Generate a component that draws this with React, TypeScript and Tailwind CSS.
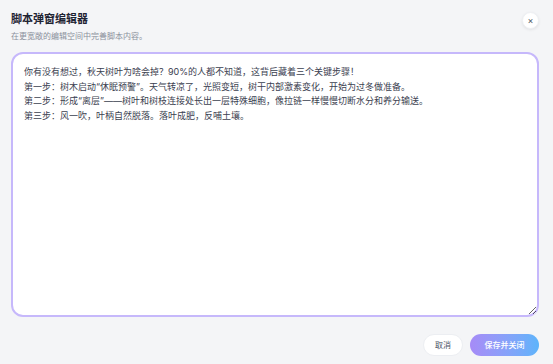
import { useEffect, useRef, useState } from 'react';

const initialScript = `你有没有想过，秋天树叶为啥会掉？90%的人都不知道，这背后藏着三个关键步骤！
第一步：树木启动“休眠预警”。天气转凉了，光照变短，树干内部激素变化，开始为过冬做准备。
第二步：形成“离层”——树叶和树枝连接处长出一层特殊细胞，像拉链一样慢慢切断水分和养分输送。
第三步：风一吹，叶柄自然脱落。落叶成肥，反哺土壤。 `;

export default function App() {
  const [script, setScript] = useState(initialScript);
  const ref = useRef<HTMLTextAreaElement>(null);

  useEffect(() => {
    // put the caret at the end, like the editor was just opened
    const el = ref.current;
    if (el) {
      el.focus();
      el.setSelectionRange(el.value.length, el.value.length);
    }
  }, []);

  return (
    <div
      className="w-full h-[364px] bg-[#f4f5f7] flex flex-col pl-[11px] pr-[14px] pt-[11px] pb-[8px]"
      style={{ fontFamily: 'Inter, "Noto Sans CJK SC", sans-serif' }}
    >
      <div className="flex items-start justify-between">
        <div>
          <h1 className="text-[11px] leading-[16px] font-bold text-[#1f2433]">脚本弹窗编辑器</h1>
          <p className="text-[8px] leading-[12px] mt-[3px] text-[#8b909c]">在更宽敞的编辑空间中完善脚本内容。</p>
        </div>
        <button
          type="button"
          className="w-[17px] h-[17px] mt-[1px] rounded-full bg-white shadow-[0_1px_3px_rgba(0,0,0,0.08)] border border-[#eef0f3] flex items-center justify-center text-[#4b5563] text-[9px] leading-none"
        >
          ×
        </button>
      </div>

      <textarea
        ref={ref}
        value={script}
        onChange={(e) => setScript(e.target.value)}
        spellCheck={false}
        className="mt-[10px] h-[265px] w-full bg-white border-2 border-[#c6b8fb] rounded-[12px] px-[11px] py-[11px] text-[9px] leading-[14.7px] text-[#3b4150] outline-none resize-y caret-[#1f2433]"
      />

      <div className="flex justify-end gap-[7px] mt-[17px]">
        <button
          type="button"
          className="w-[40px] h-[22px] rounded-full bg-white border border-[#eceef2] text-[8px] text-[#4b5263]"
        >
          取消
        </button>
        <button
          type="button"
          className="w-[69px] h-[22px] rounded-full bg-gradient-to-r from-[#a68bf7] to-[#5cb4fb] text-[8px] font-medium text-white"
        >
          保存并关闭
        </button>
      </div>
    </div>
  );
}
